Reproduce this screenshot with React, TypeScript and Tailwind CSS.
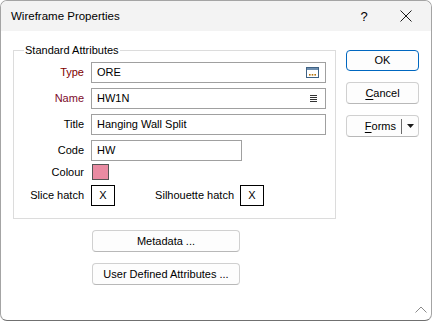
import React from "react";

const Btn = ({ children, className = "" }: { children: React.ReactNode; className?: string }) => (
  <div
    className={
      "h-[21px] flex items-center justify-center rounded-[4px] border bg-[#fdfdfd] text-[11px] text-black " +
      className
    }
  >
    {children}
  </div>
);

const Row = ({
  label,
  color = "text-black",
  children,
}: {
  label: string;
  color?: string;
  children: React.ReactNode;
}) => (
  <div className="flex items-center h-[21px]">
    <div className={"w-[70px] text-right text-[11px] leading-none " + color}>{label}</div>
    <div className="ml-[7px] flex items-center h-full">{children}</div>
  </div>
);

const Input = ({ value, width, icon }: { value: string; width: string; icon?: React.ReactNode }) => (
  <div className={"h-[21px] border border-[#a0a0a0] bg-white flex items-center pl-[5px] pr-[5px] " + width}>
    <span className="flex-1 text-[11px] text-black leading-none">{value}</span>
    {icon}
  </div>
);

export default function App() {
  return (
    <div className="w-[432px] h-[321px] flex flex-col bg-white border border-[#a4a4a4] border-b-[#707070] rounded-[7px] overflow-hidden relative font-['Liberation_Sans',Arial,sans-serif] text-black">
      {/* Title bar */}
      <div className="h-[30px] bg-[#f3f3f3] flex items-center pl-[10px] shrink-0">
        <span className="text-[11.5px] leading-none flex-1 mt-[1px]">Wireframe Properties</span>
        <span className="text-[13px] leading-none w-[12px] text-center mr-[30px] mt-[1px]">?</span>
        <svg width="12" height="12" viewBox="0 0 12 12" className="mr-[19px]">
          <path d="M0.5 0.5 L11.5 11.5 M11.5 0.5 L0.5 11.5" stroke="#1a1a1a" strokeWidth="1" />
        </svg>
      </div>

      {/* Body */}
      <div className="flex flex-1 pl-[12px]">
        <div className="w-[323px] flex flex-col">
          {/* Group box */}
          <div className="relative mt-[19px] h-[169px] border border-[#dcdcdc] pt-[11px]">
            <div className="absolute left-[10px] top-[-8px] px-[1px] bg-white text-[11px] leading-[14px] h-[14px]">
              Standard Attributes
            </div>
            <div className="flex flex-col gap-[5px]">
              <Row label="Type" color="text-[#800000]">
                <Input
                  value="ORE"
                  width="w-[235px]"
                  icon={
                    <svg width="13" height="11" viewBox="0 0 13 11" className="mr-[1px]">
                      <rect x="0.5" y="0.5" width="12" height="10" fill="#fff" stroke="#3f6284" />
                      <rect x="1" y="1" width="11" height="2" fill="#6f8fb0" />
                      <rect x="3" y="7" width="1.6" height="1.6" fill="#b5730b" />
                      <rect x="5.7" y="7" width="1.6" height="1.6" fill="#b5730b" />
                      <rect x="8.4" y="7" width="1.6" height="1.6" fill="#b5730b" />
                    </svg>
                  }
                />
              </Row>
              <Row label="Name" color="text-[#7d0a2a]">
                <Input
                  value="HW1N"
                  width="w-[235px]"
                  icon={
                    <svg width="7" height="7" viewBox="0 0 7 7" className="mr-[3px]">
                      <path d="M0 0.5 H7 M0 2.5 H7 M0 4.5 H7 M0 6.5 H7" stroke="#333" strokeWidth="1" />
                    </svg>
                  }
                />
              </Row>
              <Row label="Title">
                <Input value="Hanging Wall Split" width="w-[235px]" />
              </Row>
              <Row label="Code">
                <Input value="HW" width="w-[151px]" />
              </Row>
            </div>
            <div className="flex items-center h-[16px] mt-[3px]">
              <div className="w-[70px] text-right text-[11px] leading-none">Colour</div>
              <div className="ml-[8px] w-[17px] h-[16px] border border-[#555] bg-[#e98ba2]" />
            </div>
            <div className="flex items-center h-[21px] mt-[5px]">
              <div className="w-[70px] text-right text-[11px] leading-none">Slice hatch</div>
              <div className="ml-[7px] w-[24px] h-[21px] border border-black flex items-center justify-center text-[11px] leading-none">
                X
              </div>
              <div className="w-[125px] text-right pr-[6px] text-[11px] leading-none">Silhouette hatch</div>
              <div className="w-[24px] h-[21px] border border-black flex items-center justify-center text-[11px] leading-none">
                X
              </div>
            </div>
          </div>

          {/* Lower buttons */}
          <Btn className="w-[148px] h-[22px] ml-[79px] mt-[11px] border-[#d0d0d0] border-b-[#b8b8b8]">Metadata ...</Btn>
          <Btn className="w-[148px] h-[22px] ml-[79px] mt-[11px] border-[#d0d0d0] border-b-[#b8b8b8]">
            User Defined Attributes ...
          </Btn>
        </div>

        {/* Right buttons */}
        <div className="ml-[10px] flex flex-col w-[73px]">
          <Btn className="mt-[19px] h-[21px] border-[#0067c0]">OK</Btn>
          <Btn className="mt-[11px] h-[22px] border-[#d0d0d0] border-b-[#b8b8b8]">
            <span>
              <span className="underline underline-offset-2">C</span>ancel
            </span>
          </Btn>
          <div className="mt-[11px] h-[22px] flex items-center rounded-[4px] border border-[#d0d0d0] border-b-[#b8b8b8] bg-[#fdfdfd] text-[11px]">
            <div className="flex-1 text-right pr-[5px] leading-none">
              <span className="underline underline-offset-2">F</span>orms
            </div>
            <div className="w-px h-[15px] bg-[#6a6a6a]" />
            <div className="w-[16px] flex items-center justify-center">
              <svg width="7" height="4" viewBox="0 0 7 4">
                <path d="M0 0 H7 L3.5 4 Z" fill="#1a1a1a" />
              </svg>
            </div>
          </div>
        </div>
      </div>

      {/* Resize grip */}
      <svg width="12" height="7" viewBox="0 0 12 7" className="absolute right-[4px] bottom-[7px]">
        <path d="M0.5 6.5 L6 1 L11.5 6.5" stroke="#8a8a8a" strokeWidth="1" fill="none" />
      </svg>
    </div>
  );
}
